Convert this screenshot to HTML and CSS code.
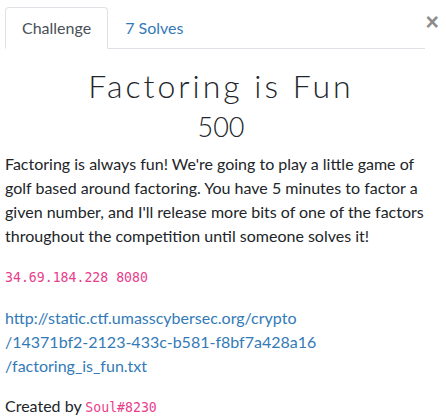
FILE: index.html
```html
<!DOCTYPE html>
<html>
<head>
<meta charset="utf-8">
<link rel="stylesheet" href="styles.css">
</head>
<body>
<div class="modal">
  <button class="close" aria-label="Close">&times;</button>
  <ul class="tabs">
    <li class="tab active">Challenge</li>
    <li class="tab"><a href="#">7 Solves</a></li>
  </ul>
  <div class="content">
    <h2 class="title">Factoring is Fun</h2>
    <h3 class="value">500</h3>
    <p>Factoring is always fun! We're going to play a little game of golf based around factoring. You have 5 minutes to factor a given number, and I'll release more bits of one of the factors throughout the competition until someone solves it!</p>
    <p><code>34.69.184.228 8080</code></p>
    <p><a href="#">http://static.ctf.umasscybersec.org/crypto<br>/14371bf2-2123-433c-b581-f8bf7a428a16<br>/factoring_is_fun.txt</a></p>
    <p class="author">Created by <code>Soul#8230</code></p>
  </div>
</div>
</body>
</html>
```
FILE: styles.css
```css
html, body { margin: 0; padding: 0; background: #fff; }
body {
  font-family: Lato, "Open Sans", sans-serif;
  font-size: 16px;
  line-height: 24px;
  color: #212529;
}
.modal {
  position: relative;
  width: 432px;
  padding: 7px 0 0 5px;
}
.close {
  position: absolute;
  top: 10px;
  right: -2px;
  border: 0;
  background: none;
  padding: 0;
  font-family: "Liberation Sans", Arial, sans-serif;
  font-size: 23px;
  font-weight: 700;
  line-height: 24px;
  color: #000;
  opacity: 0.45;
}
.tabs {
  list-style: none;
  margin: 0;
  padding: 0;
  width: 420px;
  display: flex;
  border-bottom: 1px solid #dee2e6;
}
.tab {
  padding: 8px 16px;
  margin-bottom: -1px;
  border: 1px solid transparent;
  border-radius: 4px 4px 0 0;
  color: #495057;
}
.tab.active {
  border-color: #dee2e6 #dee2e6 #fff;
  background: #fff;
}
.tab a { color: #337ab7; text-decoration: none; }
.content { padding-top: 18px; }
.title {
  margin: 0 0 5px;
  text-align: center;
  font-family: Lato, sans-serif;
  font-weight: 300;
  font-size: 32px;
  line-height: 38px;
  letter-spacing: 3px;
  color: #212529;
}
.value {
  margin: 0 0 8px;
  text-align: center;
  font-weight: 300;
  font-size: 27px;
  line-height: 34px;
}
p { margin: 0 0 16px; }
code {
  font-family: "DejaVu Sans Mono", monospace;
  font-size: 13.2px;
  color: #e83e8c;
}
a { color: #337ab7; text-decoration: none; }
.author { margin: 0; }
```
